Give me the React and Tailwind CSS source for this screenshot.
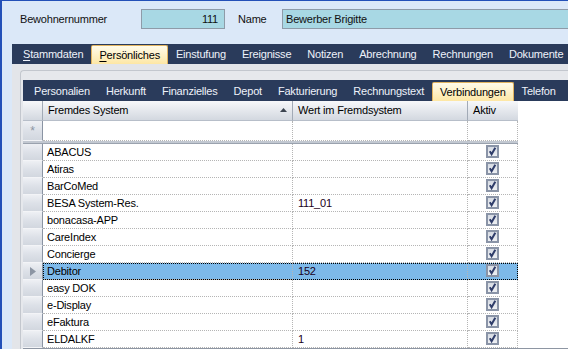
import React from "react";

const mainTabs = [
  { l: "Stammdaten", u: 0 },
  { l: "Persönliches", u: 0, sel: true },
  { l: "Einstufung" },
  { l: "Ereignisse" },
  { l: "Notizen" },
  { l: "Abrechnung" },
  { l: "Rechnungen" },
  { l: "Dokumente" },
];

const subTabs = [
  "Personalien",
  "Herkunft",
  "Finanzielles",
  "Depot",
  "Fakturierung",
  "Rechnungstext",
  "Verbindungen",
  "Telefon",
];

const rows = [
  ["ABACUS", ""],
  ["Atiras", ""],
  ["BarCoMed", ""],
  ["BESA System-Res.", "111_01"],
  ["bonacasa-APP", ""],
  ["CareIndex", ""],
  ["Concierge", ""],
  ["Debitor", "152", true],
  ["easy DOK", ""],
  ["e-Display", ""],
  ["eFaktura", ""],
  ["ELDALKF", "1"],
];

function Label({ t, u }) {
  if (u === undefined) return <>{t}</>;
  return (
    <>
      <span className="underline underline-offset-2">{t.slice(0, 1)}</span>
      {t.slice(1)}
    </>
  );
}

function Tab({ t, u, sel }) {
  if (sel)
    return (
      <div className="h-[19px] px-[7px] flex items-center whitespace-nowrap bg-gradient-to-b from-[#fffbea] to-[#fde7a4] border border-b-0 border-[#e2b460] rounded-t-[2px] text-black">
        <Label t={t} u={u} />
      </div>
    );
  return (
    <div className="h-[19px] px-2 flex items-center whitespace-nowrap text-[#eef2fa]">
      <Label t={t} u={u} />
    </div>
  );
}

function Check() {
  return (
    <svg width="13" height="13" viewBox="0 0 13 13" className="block">
      <defs>
        <linearGradient id="cbg" x1="0" y1="0" x2="0" y2="1">
          <stop offset="0" stopColor="#d3d8e1" />
          <stop offset="1" stopColor="#f0f2f5" />
        </linearGradient>
      </defs>
      <rect x="1" y="1" width="11" height="11" fill="url(#cbg)" stroke="#8a94a7" strokeWidth="2" />
      <path d="M3.8 6.2 L5.6 9.2 L9.3 2.8" fill="none" stroke="#2f3d6a" strokeWidth="2" />
    </svg>
  );
}

function RowHeader({ children, h }) {
  return (
    <div
      className={`w-[20px] shrink-0 ${h} border-r border-[#8a94a3] bg-gradient-to-b from-[#eef0f4] via-[#dde1e8] to-[#d2d7df] border-b border-b-[#f3f4f7] flex items-center justify-center text-[#8c95a3]`}
    >
      {children}
    </div>
  );
}

export default function App() {
  return (
    <div className="w-[568px] h-[349px] overflow-hidden bg-[#dbe8f8] border-l-2 border-t border-[#2350b8] font-['Liberation_Sans',Arial,sans-serif] text-[11px] tracking-[-0.2px] text-[#111] flex flex-col">
      {/* top fields */}
      <div className="flex items-center h-[20px] mt-[8px] shrink-0">
        <div className="w-[139px] pl-[18px] shrink-0">Bewohnernummer</div>
        <div className="w-[84px] h-[20px] shrink-0 bg-[#a8d8e4] border border-[#8e9ba8] flex items-center justify-end pr-[6px]">
          111
        </div>
        <div className="w-[57px] pl-[13px] shrink-0">Name</div>
        <div className="flex-1 h-[20px] bg-[#a8d8e4] border border-r-0 border-[#8e9ba8] flex items-center pl-[3px]">
          Bewerber Brigitte
        </div>
      </div>

      {/* main tab area */}
      <div className="mt-[15px] ml-[10px] flex-1 flex flex-col min-h-0">
        <div className="h-[20px] shrink-0 bg-[#2a3b5b] flex items-end pl-[3px]">
          {mainTabs.map((t) => (
            <Tab key={t.l} t={t.l} u={t.u} sel={t.sel} />
          ))}
        </div>
        <div className="flex-1 bg-[#e3e5e9] pl-[8px] pt-[6px] flex flex-col min-h-0">
          <div className="flex-1 border-l border-t border-[#c3c7ce] rounded-tl-[4px] bg-[#e6e8ec] pl-[2px] pt-[9px] flex flex-col min-h-0">
            {/* sub tabs */}
            <div className="h-[21px] shrink-0 bg-[#2a3b5b] flex items-end pl-[3px]">
              {subTabs.map((t) => (
                <Tab key={t} t={t} sel={t === "Verbindungen"} />
              ))}
            </div>
            {/* grid */}
            <div className="flex-1 bg-white flex flex-col min-h-0">
              {/* header */}
              <div className="flex h-[20px] shrink-0">
                <div className="w-[20px] shrink-0 border-r border-[#a2aab6] bg-gradient-to-b from-[#f7f8fa] to-[#d3d8e0] border-b border-b-[#b7bec9]" />
                <div className="w-[250px] shrink-0 border-r border-[#a2aab6] bg-gradient-to-b from-[#f7f8fa] to-[#d3d8e0] border-b border-b-[#b7bec9] flex items-center pl-[5px] pr-[5px] text-black">
                  <span className="flex-1">Fremdes System</span>
                  <svg width="7" height="4" viewBox="0 0 7 4" className="mb-[2px]">
                    <path d="M0 4 L3.5 0 L7 4 Z" fill="#3c4450" />
                  </svg>
                </div>
                <div className="w-[175px] shrink-0 border-r border-[#a2aab6] bg-gradient-to-b from-[#f7f8fa] to-[#d3d8e0] border-b border-b-[#b7bec9] flex items-center pl-[5px] text-black">
                  Wert im Fremdsystem
                </div>
                <div className="w-[50px] shrink-0 bg-gradient-to-b from-[#f7f8fa] to-[#d3d8e0] border-b border-[#b7bec9] flex items-center pl-[5px] text-black">
                  Aktiv
                </div>
                <div className="flex-1" />
              </div>
              {/* new row */}
              <div className="flex h-[20px] shrink-0">
                <RowHeader h="h-[20px]">
                  <span className="text-[12px] leading-none">*</span>
                </RowHeader>
                <div className="w-[250px] shrink-0 border-r border-b border-dotted border-[#b5b5b5]" />
                <div className="w-[175px] shrink-0 border-r border-b border-dotted border-[#b5b5b5]" />
                <div className="w-[50px] shrink-0 border-r border-b border-dotted border-[#b5b5b5]" />
                <div className="flex-1" />
              </div>
              {/* separator */}
              <div className="flex h-[3px] shrink-0">
                <div className="w-[495px] shrink-0 bg-[#c2c8d1] border-b border-[#9aa2ae]" />
                <div className="flex-1" />
              </div>
              {/* data rows */}
              {rows.map(([name, val, sel]) => (
                <div key={name} className="flex h-[17px] shrink-0">
                  <RowHeader h="h-[17px]">
                    {sel && (
                      <svg width="6" height="9" viewBox="0 0 6 9">
                        <path d="M0 0 L6 4.5 L0 9 Z" fill="#8c95a3" />
                      </svg>
                    )}
                  </RowHeader>
                  <div
                    className={`flex shrink-0 ${
                      sel ? "bg-[#7db9e9] outline outline-1 outline-dotted outline-black -outline-offset-1" : ""
                    }`}
                  >
                    <div className="w-[250px] shrink-0 border-r border-b border-dotted border-[#b5b5b5] pl-[4px] flex items-center text-black whitespace-nowrap">
                      {name}
                    </div>
                    <div className="w-[175px] shrink-0 border-r border-b border-dotted border-[#b5b5b5] pl-[5px] flex items-center text-[#1a0020] whitespace-nowrap">
                      {val}
                    </div>
                    <div className="w-[50px] shrink-0 border-r border-b border-dotted border-[#b5b5b5] flex items-start justify-center pt-[1px]">
                      <Check />
                    </div>
                  </div>
                  <div className="flex-1" />
                </div>
              ))}
              <div className="h-[2px] shrink-0 bg-[#8e96a3]" />
            </div>
          </div>
        </div>
      </div>
    </div>
  );
}
